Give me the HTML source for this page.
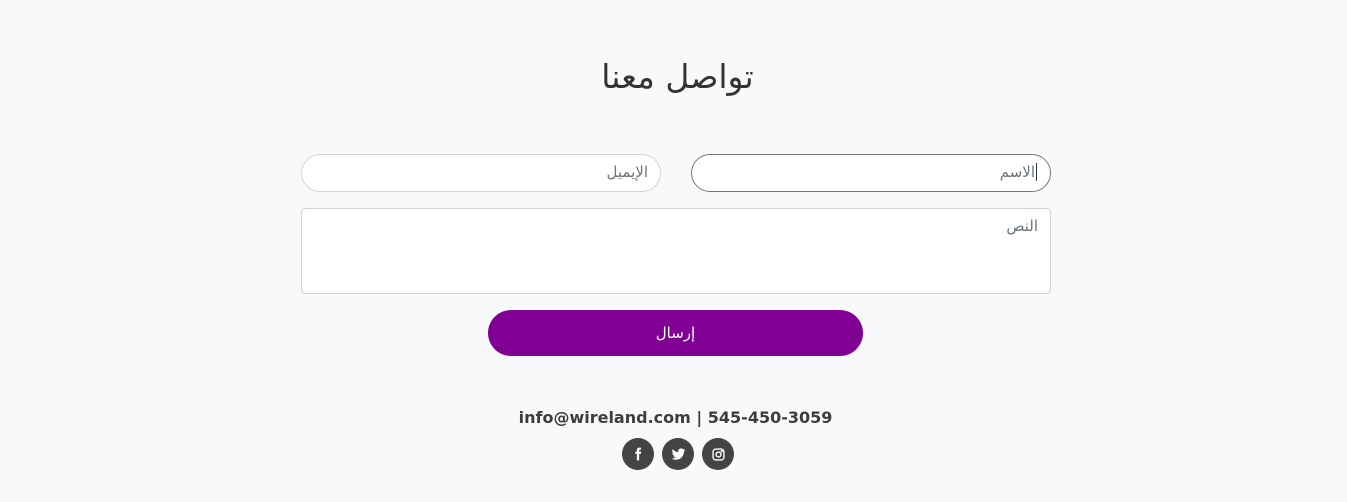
<!DOCTYPE html>
<html dir="rtl"><head><meta charset="utf-8">
<style>
*{box-sizing:border-box;margin:0;padding:0}
body{width:1347px;height:502px;background:#f8f9fb;font-family:"DejaVu Sans","Liberation Sans",sans-serif;position:relative;overflow:hidden}
h1{position:absolute;top:57px;left:4px;width:1347px;text-align:center;font-weight:normal;font-size:33px;color:#333;}
.inp{position:absolute;height:38px;border:1px solid #ced4da;border-radius:19px;background:#fff;font-size:15px;color:#6c757d;padding:8px 12px;text-align:right}
.ta{position:absolute;left:301px;top:208px;width:750px;height:86px;border:1px solid #ced4da;border-radius:4px;background:#fff;font-size:15px;color:#6c757d;padding:8px 12px;text-align:right}
.btn{position:absolute;left:488px;top:310px;width:375px;height:46px;border-radius:23px;background:#800094;color:#fff;font-size:15px;text-align:center;line-height:46px}
.contact{position:absolute;top:408px;left:2px;width:1347px;text-align:center;font-weight:bold;font-size:16px;color:#3d3d3d;direction:ltr}
.soc{position:absolute;top:438px;width:32px;height:32px;border-radius:50%;background:#444;display:flex;align-items:center;justify-content:center}
</style></head><body>
<h1>تواصل معنا</h1>
<div class="inp" style="left:691px;top:154px;width:360px;border-color:#777;padding-right:13px"><span style="border-right:1px solid #333;padding-right:1px">الاسم</span></div>
<div class="inp" style="left:301px;top:154px;width:360px">الإيميل</div>
<div class="ta">النص</div>
<div class="btn">إرسال</div>
<div class="contact">info@wireland.com | 545-450-3059</div>
<div class="soc" style="left:622px"><svg width="14" height="14" viewBox="0 0 24 24"><path d="M14 8V6c0-1 .5-1.5 1.5-1.5H17V1h-3c-3 0-4 2-4 4.5V8H7.5v3.5H10V23h4V11.5h3l.5-3.5z" fill="#fff"/></svg></div>
<div class="soc" style="left:662px"><svg width="15" height="15" viewBox="0 0 24 24"><path d="M23 4.5c-.8.4-1.7.6-2.6.7.9-.6 1.6-1.4 2-2.5-.9.5-1.9.9-2.9 1.1A4.5 4.5 0 0 0 11.8 8 12.8 12.8 0 0 1 2.5 3.3a4.5 4.5 0 0 0 1.4 6 4.4 4.4 0 0 1-2-.6v.1a4.5 4.5 0 0 0 3.6 4.4 4.5 4.5 0 0 1-2 .1 4.5 4.5 0 0 0 4.2 3.1A9 9 0 0 1 1 18.3 12.8 12.8 0 0 0 7.9 20.3c8.3 0 12.8-6.9 12.8-12.8v-.6c.9-.6 1.6-1.4 2.3-2.4z" fill="#fff"/></svg></div>
<div class="soc" style="left:702px"><svg width="13" height="13" viewBox="0 0 24 24" fill="none" stroke="#fff" stroke-width="2.5"><rect x="2" y="2" width="20" height="20" rx="5"/><circle cx="12" cy="12" r="4.5"/><circle cx="18" cy="6" r=".8" fill="#fff"/></svg></div>
</body></html>
